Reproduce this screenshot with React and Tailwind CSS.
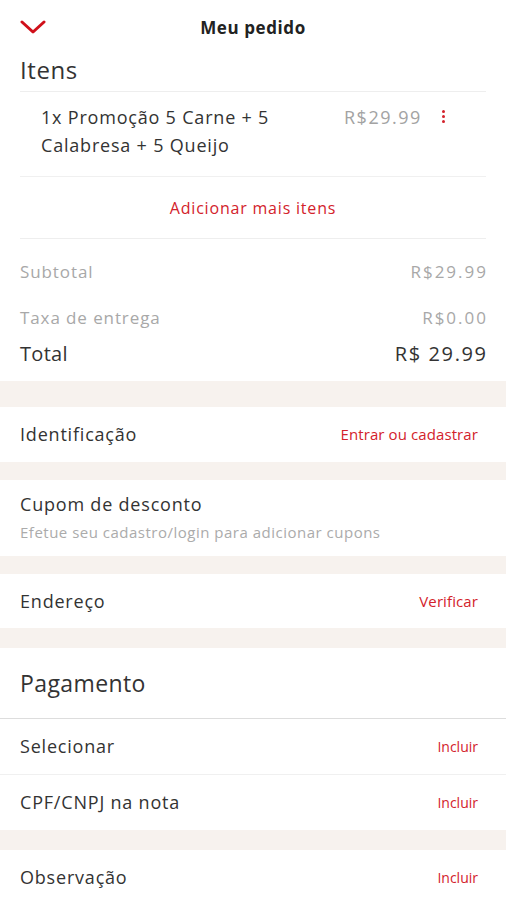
import React from "react";

function Row({ label, action, h, small }) {
  return (
    <div className={`flex items-center justify-between pl-[20px] pr-[28px] bg-white ${h}`}>
      <span className="text-[18px] tracking-[0.8px] text-[#333]">{label}</span>
      <span className={`${small ? "text-[14px]" : "text-[15px] tracking-[0.1px]"} text-[#d3222b]`}>{action}</span>
    </div>
  );
}

export default function App() {
  return (
    <div className="w-[506px] min-h-[900px] bg-white overflow-hidden" style={{ fontFamily: "'Open Sans', 'Noto Sans', sans-serif" }}>
      {/* Header */}
      <div className="relative h-[56px] flex items-center justify-center">
        <svg className="absolute left-[20px] top-[20px]" width="26" height="14" viewBox="0 0 26 14" fill="none">
          <path d="M2 2 L13 12 L24 2" stroke="#d0101a" strokeWidth="3" strokeLinecap="round" strokeLinejoin="round" />
        </svg>
        <span className="text-[17px] font-bold tracking-[0.6px] text-[#222]">Meu pedido</span>
      </div>

      {/* Itens */}
      <div className="px-[20px]">
        <div className="text-[24px] leading-[28px] tracking-[0.6px] text-[#333] pb-[7px]">Itens</div>
        <div className="h-[1px] bg-[#eeeeee]" />
        <div className="flex pl-[21px] pt-[11px] pb-[17px]">
          <div className="w-[303px] shrink-0 text-[18px] leading-[28px] tracking-[0.8px] text-[#333]">
            1x Promoção 5 Carne + 5 Calabresa + 5 Queijo
          </div>
          <div className="w-[98px] shrink-0 text-[18px] leading-[28px] tracking-[1.5px] text-[#a3a3a3]">R$29.99</div>
          <div className="pt-[7px] flex flex-col gap-[2px] items-center">
            <span className="w-[3px] h-[3px] rounded-full bg-[#d3222b]" />
            <span className="w-[3px] h-[3px] rounded-full bg-[#d3222b]" />
            <span className="w-[3px] h-[3px] rounded-full bg-[#d3222b]" />
          </div>
        </div>
        <div className="h-[1px] bg-[#f0f0f0]" />
        <div className="h-[61px] flex items-center justify-center text-[16px] tracking-[0.8px] text-[#d3222b]">
          Adicionar mais itens
        </div>
        <div className="h-[1px] bg-[#eeeeee]" />
        <div className="pt-[21px] flex justify-between text-[17px] leading-[24px] text-[#a8a8a8]">
          <span className="tracking-[0.9px]">Subtotal</span>
          <span className="tracking-[2px] mr-[-2px]">R$29.99</span>
        </div>
        <div className="pt-[22px] flex justify-between text-[17px] leading-[24px] text-[#a8a8a8]">
          <span className="tracking-[0.9px]">Taxa de entrega</span>
          <span className="tracking-[2px] mr-[-2px]">R$0.00</span>
        </div>
        <div className="pt-[11px] pb-[14px] flex justify-between text-[20px] leading-[26px] text-[#333]">
          <span className="tracking-[0.3px]">Total</span>
          <span className="tracking-[1.6px] mr-[-1.6px]">R$ 29.99</span>
        </div>
      </div>

      <div className="h-[26px] bg-[#f7f2ee]" />
      <Row label="Identificação" action="Entrar ou cadastrar" h="h-[55px]" />
      <div className="h-[18px] bg-[#f7f2ee]" />
      <div className="h-[76px] px-[20px] pt-[12px] flex flex-col bg-white">
        <div className="text-[18px] leading-[24px] tracking-[0.8px] text-[#333]">Cupom de desconto</div>
        <div className="mt-[7px] text-[15px] leading-[18px] tracking-[0.5px] text-[#ababab]">Efetue seu cadastro/login para adicionar cupons</div>
      </div>
      <div className="h-[18px] bg-[#f7f2ee]" />
      <Row label="Endereço" action="Verificar" h="h-[54px]" />
      <div className="h-[20px] bg-[#f7f2ee]" />
      <div className="h-[70px] px-[20px] flex items-center text-[23px] tracking-[0.4px] text-[#333]">Pagamento</div>
      <div className="h-[1px] bg-[#dddddd]" />
      <Row label="Selecionar" action="Incluir" h="h-[55px]" small />
      <div className="h-[1px] bg-[#f0f0f0]" />
      <Row label="CPF/CNPJ na nota" action="Incluir" h="h-[55px]" small />
      <div className="h-[20px] bg-[#f7f2ee]" />
      <Row label="Observação" action="Incluir" h="h-[55px]" small />
    </div>
  );
}
